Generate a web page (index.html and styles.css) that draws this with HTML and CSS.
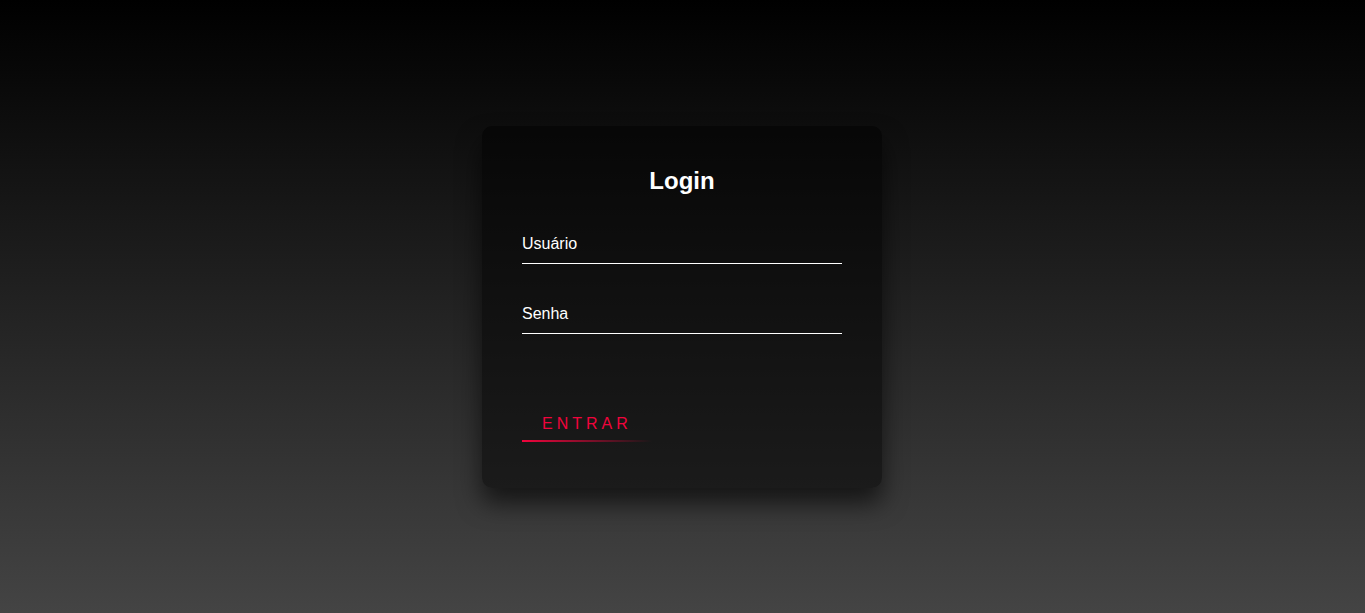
FILE: index.html
```html
<!DOCTYPE html>
<html lang="pt">
<head>
<meta charset="utf-8">
<title>Login</title>
<link rel="stylesheet" href="styles.css">
</head>
<body>
<div class="login-box">
  <h2 class="title">Login</h2>
  <form class="form">
    <div class="user-box">
      <input class="field" type="text" placeholder="Usuário">
    </div>
    <div class="user-box">
      <input class="field" type="password" placeholder="Senha">
    </div>
    <a class="submit" href="#">ENTRAR<span class="line"></span></a>
  </form>
</div>
</body>
</html>
```
FILE: styles.css
```css
html, body {
  margin: 0;
  padding: 0;
  height: 100%;
}
body {
  font-family: "Liberation Sans", Arial, sans-serif;
  background: linear-gradient(#000000, #444444);
  display: flex;
  align-items: center;
  justify-content: center;
}
.login-box {
  width: 400px;
  padding: 40px 40px 42px;
  margin-right: 1px;
  box-sizing: border-box;
  background: rgba(0, 0, 0, 0.5);
  box-shadow: 0 15px 25px rgba(0, 0, 0, 0.6);
  border-radius: 10px;
}
.title {
  margin: 0 0 29px;
  padding: 1px 0 0;
  color: #fff;
  text-align: center;
  font-size: 24px;
  font-weight: bold;
}
.user-box {
  position: relative;
}
.field {
  display: block;
  width: 100%;
  box-sizing: border-box;
  padding: 10px 0;
  font-family: "Liberation Sans", Arial, sans-serif;
  font-size: 16px;
  line-height: 19px;
  color: #fff;
  margin: 0 0 30px;
  border: none;
  border-bottom: 1px solid #fff;
  outline: none;
  background: transparent;
}
.field::placeholder {
  color: #fff;
  opacity: 1;
}
.submit {
  position: relative;
  display: inline-block;
  padding: 11px 20px 9px;
  margin-top: 40px;
  color: #f0043c;
  font-size: 16px;
  line-height: 18px;
  text-decoration: none;
  letter-spacing: 4px;
  overflow: hidden;
}
.line {
  position: absolute;
  left: 0;
  bottom: 0;
  width: 100%;
  height: 2px;
  background: linear-gradient(90deg, #f0043c, transparent);
}
```
